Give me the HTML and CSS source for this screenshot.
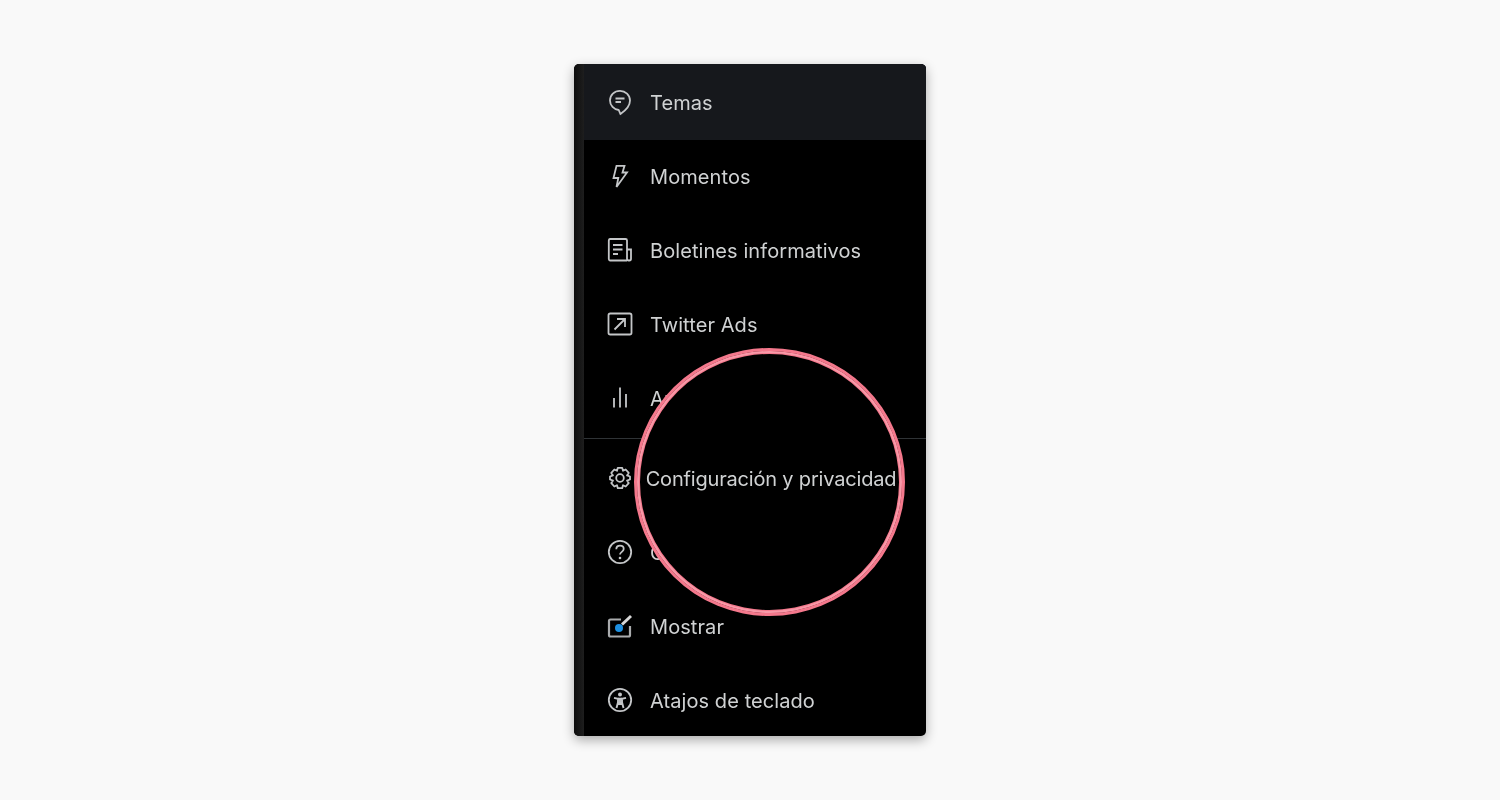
FILE: index.html
```html
<!DOCTYPE html>
<html lang="es">
<head>
<meta charset="utf-8">
<title>Menú</title>
<link rel="stylesheet" href="styles.css">
</head>
<body>
<div class="card">
  <div class="strip"></div>
  <nav class="menu">
    <a class="row row-active">
      <svg class="icon" viewBox="0 0 24 24"><path d="M12 .8C6.300.8 2 4.900 2 10.500c0 5.100 3.900 9 8.700 9.500l1.700 3.900c3.100-2.100 9.600-6.200 9.600-13.400C22 5 17.400.8 12 .8z"/><path d="M7.500 8.500h9M7.500 12h5.500"/></svg>
      <span class="label">Temas</span>
    </a>
    <a class="row">
      <svg class="icon" viewBox="0 0 24 24"><path d="M8.500 1.800h8l-2 6.700h4.500L8.500 23l1.800-9H5.500L8.500 1.800z"/></svg>
      <span class="label">Momentos</span>
    </a>
    <a class="row">
      <svg class="icon" viewBox="0 0 24 24"><path d="M19 22.500H2A1.500 1.500 0 0 1 .8 21V2.500A1.500 1.500 0 0 1 2 1h15.500A1.500 1.500 0 0 1 19 2.500v18.300c0 .9.700 1.700 1.700 1.700h.6c1.100 0 1.700-.8 1.700-1.700V11.500H19"/><path d="M5 7h9.500M5 11.500h9.500M5 16h5"/></svg>
      <span class="label">Boletines informativos</span>
    </a>
    <a class="row">
      <svg class="icon" viewBox="0 0 24 24"><rect x=".5" y="1.500" width="23" height="21" rx="1.800"/><path d="M6.500 17.500 16.500 7.500M9 7H17V15"/></svg>
      <span class="label">Twitter Ads</span>
    </a>
    <a class="row">
      <svg class="icon" viewBox="0 0 24 24"><path d="M6 12v9.500M12 1.500v20M18 8v13.500"/></svg>
      <span class="label">Analíticas</span>
    </a>
    <div class="divider"></div>
    <a class="row">
      <svg class="icon" viewBox="0 0 24 24"><circle cx="12" cy="12" r="3.800"/><path d="M9.800 1.800h4.400l.8 3 2.700-1.300 3 3.400-1.700 2.500 3 1.100v3l-3 1.100 1.700 2.500-3 3.400-2.700-1.300-.8 3H9.800l-.8-3-2.700 1.300-3-3.400L5 14.600l-3-1.100v-3l3-1.100-1.700-2.500 3-3.400L9 4.800l.8-3z" stroke-linejoin="round"/></svg>
      <span class="label label-hidden">Configuración y privacidad</span>
    </a>
    <a class="row">
      <svg class="icon" viewBox="0 0 24 24"><circle cx="12" cy="12" r="11.200"/><path d="M8.300 9.200c0-2 1.600-3.500 3.700-3.500s3.700 1.400 3.700 3.300c0 2.800-3.700 2.900-3.700 5.500"/><circle class="dot" cx="12" cy="18" r="1.300"/></svg>
      <span class="label">Centro de ayuda</span>
    </a>
    <a class="row">
      <svg class="icon" viewBox="0 0 24 24"><path class="box" d="M13 5.500H2.500A1.500 1.500 0 0 0 1 7v14a1.500 1.500 0 0 0 1.500 1.500h18A1.500 1.500 0 0 0 22 21V12"/><path class="brush" d="M14 10.500 23 2"/><circle class="paint" cx="11" cy="14" r="4"/></svg>
      <span class="label">Mostrar</span>
    </a>
    <a class="row">
      <svg class="icon" viewBox="0 0 24 24"><circle cx="12" cy="12" r="11.200"/><circle class="dot" cx="12" cy="6.500" r="2"/><path class="fig" d="M6 9.800 10 10.800v3.500L8.500 20M18 9.800 14 10.800v3.500L15.500 20M10 10.800h4M10 14.500l2 1.500 2-1.500M12 11v5"/></svg>
      <span class="label">Atajos de teclado</span>
    </a>
  </nav>
  <div class="spot"><span class="spot-text">Configuración y privacidad</span></div>
</div>
</body>
</html>
```
FILE: styles.css
```css
* { box-sizing: border-box; }
html, body { margin: 0; height: 100%; }
body {
  width: 1500px;
  height: 800px;
  background: #f9f9f9;
  display: flex;
  justify-content: center;
  padding-top: 64px;
  overflow: hidden;
  font-family: Inter, "Liberation Sans", sans-serif;
}
.card {
  position: relative;
  width: 352px;
  height: 672px;
  display: flex;
  background: #000;
  border-radius: 5px;
  overflow: hidden;
  box-shadow: 0 4px 12px rgba(0, 0, 0, .32);
}
.strip {
  width: 10px;
  flex: none;
  background: linear-gradient(90deg, #0c0c0c, #1e1e1e);
}
.menu {
  flex: 1;
  min-width: 0;
  padding-top: 1px;
  display: flex;
  flex-direction: column;
}
.row {
  flex: none;
  height: 74px;
  display: flex;
  align-items: center;
  gap: 18px;
  padding-left: 24px;
  color: #d0d2d3;
  white-space: nowrap;
}
.row-active {
  background: #16181c;
  box-shadow: 0 -1px 0 #16181c, 0 1px 0 #16181c;
}
.label {
  font-size: 20px;
  letter-spacing: .08px;
  line-height: 24px;
  padding-top: 1px;
  filter: blur(.35px);
}
.label-hidden { visibility: hidden; }
.icon {
  width: 24px;
  height: 24px;
  flex: none;
  fill: none;
  stroke: #c4c6c8;
  stroke-width: 1.800;
  overflow: visible;
  filter: blur(.35px);
}
.icon .dot { fill: #c4c6c8; stroke: none; }
.icon .paint { fill: #1d8fe0; stroke: none; }
.icon .box { stroke: #a9abad; stroke-width: 2.200; }
.icon .brush { stroke-width: 3; stroke: #d8d8d8; }
.icon .fig { stroke-width: 1.900; }
.divider {
  flex: none;
  height: 1px;
  margin: 3px 0 2px;
  background: #2f3336;
}
.spot {
  position: absolute;
  left: 60px;
  top: 284px;
  width: 271px;
  height: 268px;
  border-radius: 50%;
  background: #000;
  border: 3px solid #f4788c;
  box-shadow: inset 0 0 0 2px #f899a8, inset 0 0 0 3px #f4788c;
  display: flex;
  align-items: center;
  justify-content: center;
  padding: 0 0 7px 3px;
  color: #d0d2d3;
}
.spot-text {
  font-size: 20px;
  letter-spacing: -.18px;
  line-height: 24px;
  white-space: nowrap;
  flex: none;
  filter: blur(.35px);
}
```
